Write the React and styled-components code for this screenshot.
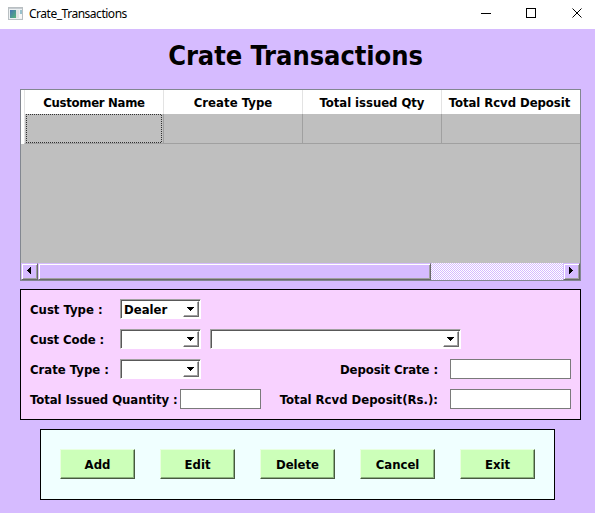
import React from "react";
import styled, { createGlobalStyle, css } from "styled-components";

const Global = createGlobalStyle`
  * { box-sizing: border-box; }
  body { margin: 0; background: #d6bbff; }
`;

const Window = styled.div`
  width: 595px;
  height: 513px;
  overflow: hidden;
  background: #d6bbff;
  color: #000;
  font: bold 13px/20px "DejaVu Sans Condensed", "DejaVu Sans", sans-serif;
  font-stretch: condensed;
`;

const TitleBar = styled.header`
  display: flex;
  align-items: center;
  height: 29px;
  padding: 0 12px 2px 8px;
  background: #fff;
`;

const Caption = styled.span`
  flex: 1;
  margin: 0 0 0 6px;
  font: 12px/20px "Noto Sans", "Open Sans", sans-serif;
  letter-spacing: ${(p) => p.$track}px;
`;

const WindowControls = styled.svg`
  display: block;
`;

const Heading = styled.h1`
  display: flex;
  justify-content: center;
  margin: 9px 0 0;
  padding-right: 4px;
  height: 51px;
  font-size: 27px;
  line-height: 36px;
  letter-spacing: -0.05px;
`;

const Label = styled.span`
  white-space: pre;
  letter-spacing: ${(p) => p.$track || 0}px;
`;

const Grid = styled.section`
  width: 561px;
  height: 192px;
  margin-left: 20px;
  border: 1px solid #828790;
  background: #bfbfbf;
  display: flex;
  flex-direction: column;
`;

const GridRow = styled.div`
  display: grid;
  grid-template-columns: 3px 139px 139px 139px 139px;
  height: ${(p) => p.$height}px;
`;

const HeadCell = styled.div`
  display: flex;
  justify-content: center;
  align-items: center;
  background: #fff;
  padding-top: 1px;
  border-left: ${(p) => (p.$edge ? "0" : "1px solid #e3e3e3")};

  &:last-child {
    padding-right: 3px;
  }
`;

const Cell = styled.div`
  border-left: 1px solid ${(p) => (p.$first ? "#e3e3e3" : "#a0a0a0")};
  border-bottom: 1px solid #a0a0a0;
  padding-left: 1px;
  display: flex;
`;

const FocusRect = styled.div`
  width: 136px;
  height: 29px;
  background:
    repeating-linear-gradient(90deg, #303030 0 1px, transparent 1px 2px) 0 0 / 100% 1px no-repeat,
    repeating-linear-gradient(90deg, #303030 0 1px, transparent 1px 2px) 0 100% / 100% 1px no-repeat,
    repeating-linear-gradient(180deg, #303030 0 1px, transparent 1px 2px) 0 0 / 1px 100% no-repeat,
    repeating-linear-gradient(180deg, transparent 0 1px, #303030 1px 2px) 100% 0 / 1px 100% no-repeat;
`;

const GridSpace = styled.div`
  flex: 1;
`;

const ScrollBar = styled.div`
  display: flex;
  height: 17px;
  background: repeating-conic-gradient(#fff 0 25%, #d6bbff 0 50%) 0 0 / 2px 2px;
`;

const raised = css`
  border: 1px solid;
  border-color: #d6bbff #696969 #696969 #d6bbff;
  box-shadow: inset 1px 1px #fff, inset -1px -1px #a0a0a0;
  background: #d6bbff;
`;

const ScrollButton = styled.div`
  ${raised}
  width: 17px;
  height: 17px;
  padding: 0 2px 2px 0;
  display: flex;
  align-items: center;
  justify-content: center;
`;

const Thumb = styled.div`
  ${raised}
  width: 393px;
`;

const Track = styled.div`
  flex: 1;
`;

const Form = styled.section`
  width: 561px;
  height: 131px;
  margin: 8px 0 0 20px;
  padding: 9px;
  border: 1px solid #000;
  background: #f8d2ff;
  display: flex;
  flex-direction: column;
  gap: 10px;
`;

const FormRow = styled.div`
  display: grid;
  grid-template-columns: ${(p) => p.$columns};
  height: 20px;
`;

const FormLabel = styled(Label)`
  padding-top: 1px;
  justify-self: ${(p) => (p.$right ? "end" : "start")};
  margin-right: ${(p) => (p.$right ? 12 : 0)}px;
`;

const Combo = styled.div`
  width: ${(p) => p.$width}px;
  height: 20px;
  display: flex;
  justify-content: space-between;
  border: 1px solid;
  border-color: #a0a0a0 #fff #fff #a0a0a0;
  box-shadow: inset 1px 1px #585858;
  background: #fff;
  padding: 1px 1px 1px 3px;
  line-height: 18px;
`;

const DropButton = styled.div`
  width: 16px;
  height: 16px;
  padding-right: 1px;
  border: 1px solid;
  border-color: #fff #696969 #696969 #fff;
  box-shadow: inset -1px -1px #a0a0a0;
  display: flex;
  align-items: center;
  justify-content: center;
`;

const Arrow = styled.svg`
  display: block;
  flex: none;
  shape-rendering: crispEdges;
`;

const Field = styled.div`
  width: ${(p) => p.$width}px;
  height: 20px;
  border: 1px solid #7a7a7a;
  background: #fff;
`;

const Actions = styled.section`
  width: 515px;
  height: 71px;
  margin: 9px 0 0 40px;
  padding: 19px;
  border: 1px solid #000;
  background: #f0ffff;
  display: flex;
  gap: 25px;
`;

const ActionButton = styled.button`
  width: 75px;
  height: 30px;
  padding: 1px 0 0;
  border: 1px solid;
  border-color: #e8ffdf #47593f #47593f #e8ffdf;
  box-shadow: inset -1px -1px #8cb27d;
  background: #ccffb9;
  color: #000;
  font: inherit;
  line-height: 26px;
`;

const headers = [
  ["Customer Name", -0.3],
  ["Create Type", 0.05],
  ["Total issued Qty", -0.05],
  ["Total Rcvd Deposit", -0.05],
];

const actions = ["Add", "Edit", "Delete", "Cancel", "Exit"];

function Select({ width, value }) {
  return (
    <Combo $width={width}>
      <Label>{value}</Label>
      <DropButton>
        <Arrow width="7" height="4">
          <path d="M0 0h7v1h-1v1h-1v1h-1v1h-1v-1h-1v-1h-1v-1h-1z" />
        </Arrow>
      </DropButton>
    </Combo>
  );
}

function AppIcon() {
  return (
    <svg width="15" height="13" shapeRendering="crispEdges">
      <defs>
        <linearGradient id="pane" x1="0" y1="0" x2="1" y2="1">
          <stop offset="0" stopColor="#4773b5" />
          <stop offset="1" stopColor="#57b578" />
        </linearGradient>
      </defs>
      <rect x=".5" y=".5" width="14" height="12" fill="#edf1f2" stroke="#b9bfc2" />
      <path d="M1 1h13v1H1z" fill="#c5cbd0" />
      <rect x="2" y="3" width="6" height="8" fill="url(#pane)" />
      <rect x="8" y="3" width="3" height="8" fill="#e3e3e3" />
      <rect x="12" y="3" width="2" height="4" fill="#9ac2cd" />
      <rect x="11" y="7" width="3" height="4" fill="#f7f7f7" />
    </svg>
  );
}

export default function App() {
  return (
    <Window>
      <Global />
      <TitleBar>
        <AppIcon />
        <Caption $track={-0.48}>Crate_Transactions</Caption>
        <WindowControls width="102" height="11" fill="none" stroke="#000">
          <path d="M0 5.5h10M45.5 .5h9v9h-9z" shapeRendering="crispEdges" />
          <path d="M91.5 .5l9 9M100.5 .5l-9 9" />
        </WindowControls>
      </TitleBar>
      <Heading>Crate Transactions</Heading>
      <Grid>
        <GridRow $height={24}>
          <HeadCell $edge />
          {headers.map(([text, track]) => (
            <HeadCell key={text}>
              <Label $track={track}>{text}</Label>
            </HeadCell>
          ))}
        </GridRow>
        <GridRow $height={30}>
          <HeadCell $edge />
          <Cell $first>
            <FocusRect />
          </Cell>
          <Cell />
          <Cell />
          <Cell />
        </GridRow>
        <GridSpace />
        <ScrollBar>
          <ScrollButton>
            <Arrow width="4" height="7"><path d="M4 0v7h-1v-1h-1v-1h-1v-1h-1v-1h1v-1h1v-1h1v-1z" /></Arrow>
          </ScrollButton>
          <Thumb />
          <Track />
          <ScrollButton>
            <Arrow width="4" height="7"><path d="M0 0v7h1v-1h1v-1h1v-1h1v-1h-1v-1h-1v-1h-1v-1z" /></Arrow>
          </ScrollButton>
        </ScrollBar>
      </Grid>
      <Form>
        <FormRow $columns="90px 81px">
          <FormLabel>Cust Type :</FormLabel>
          <Select width={81} value="Dealer" />
        </FormRow>
        <FormRow $columns="90px 90px 251px">
          <FormLabel $track={-0.1}>Cust Code :</FormLabel>
          <Select width={81} />
          <Select width={251} />
        </FormRow>
        <FormRow $columns="90px 81px 249px 121px">
          <FormLabel>Crate Type :</FormLabel>
          <Select width={81} />
          <FormLabel $right $track={-0.08}>Deposit Crate :</FormLabel>
          <Field $width={121} />
        </FormRow>
        <FormRow $columns="150px 81px 189px 121px">
          <FormLabel $track={-0.05}>Total Issued Quantity :</FormLabel>
          <Field $width={81} />
          <FormLabel $right>Total Rcvd Deposit(Rs.):</FormLabel>
          <Field $width={121} />
        </FormRow>
      </Form>
      <Actions>
        {actions.map((name) => (
          <ActionButton key={name}>{name}</ActionButton>
        ))}
      </Actions>
    </Window>
  );
}
